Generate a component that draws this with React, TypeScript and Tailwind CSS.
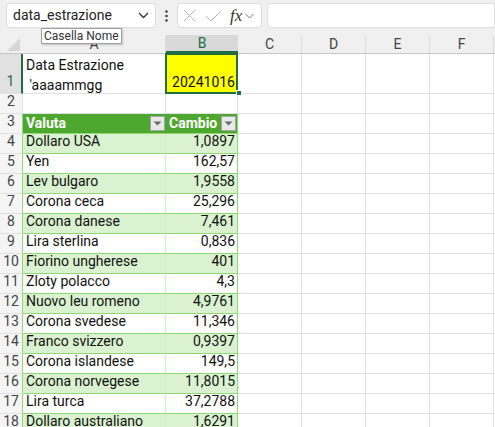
import React from "react";

const GRID = "border-[#e1e1e1]";

const data: [string, string][] = [
  ["Dollaro USA", "1,0897"],
  ["Yen", "162,57"],
  ["Lev bulgaro", "1,9558"],
  ["Corona ceca", "25,296"],
  ["Corona danese", "7,461"],
  ["Lira sterlina", "0,836"],
  ["Fiorino ungherese", "401"],
  ["Zloty polacco", "4,3"],
  ["Nuovo leu romeno", "4,9761"],
  ["Corona svedese", "11,346"],
  ["Franco svizzero", "0,9397"],
  ["Corona islandese", "149,5"],
  ["Corona norvegese", "11,8015"],
  ["Lira turca", "37,2788"],
  ["Dollaro australiano", "1,6291"],
];

function EmptyCells() {
  return (
    <>
      <div className={`w-[64px] shrink-0 border-r border-b ${GRID}`} />
      <div className={`w-[64px] shrink-0 border-r border-b ${GRID}`} />
      <div className={`w-[64px] shrink-0 border-r border-b ${GRID}`} />
      <div className={`w-[64px] shrink-0 border-r border-b ${GRID}`} />
      <div className={`w-[64px] shrink-0 border-r border-b ${GRID}`} />
    </>
  );
}

function RowHeader({ n }: { n: number }) {
  return (
    <div
      className={`w-[23px] shrink-0 flex items-end justify-center pb-[1px] border-b border-r ${GRID} bg-[#f5f5f5] text-[14px] text-[#444]`}
    >
      {n}
    </div>
  );
}

function Dropdown() {
  return (
    <div className="w-[15px] h-[15px] border border-[#a5a5a5] bg-[#e9e9e9] flex items-center justify-center">
      <svg width="9" height="5" viewBox="0 0 9 5">
        <path d="M0.5 0.5 L8.5 0.5 L4.5 4.5 Z" fill="#6b6b6b" />
      </svg>
    </div>
  );
}

export default function App() {
  return (
    <div
      className="w-[495px] h-[427px] overflow-hidden bg-white relative text-[#111]"
      style={{ fontFamily: "Roboto, 'Noto Sans', sans-serif" }}
    >
      {/* Toolbar */}
      <div className="h-[33px] bg-[#f0f0f0] flex items-start pt-[3px] pl-[6px]">
        <div className="w-[150px] h-[25px] bg-white border border-[#dcdcdc] rounded-[4px] flex items-center pl-[6px] pr-[6px] justify-between">
          <span className="text-[14px] text-[#222]">data_estrazione</span>
          <svg width="11" height="7" viewBox="0 0 11 7">
            <path d="M1 1 L5.5 5.5 L10 1" stroke="#333" strokeWidth="1.3" fill="none" />
          </svg>
        </div>
        <div className="w-[21px] h-[25px] flex items-center justify-center">
          <svg width="3" height="12" viewBox="0 0 3 12">
            <circle cx="1.5" cy="1.5" r="1.2" fill="#333" />
            <circle cx="1.5" cy="6" r="1.2" fill="#333" />
            <circle cx="1.5" cy="10.5" r="1.2" fill="#333" />
          </svg>
        </div>
        <div className="w-[85px] h-[25px] bg-white border border-[#dcdcdc] rounded-[4px] flex items-center pl-[5px]">
          <svg width="13" height="13" viewBox="0 0 13 13">
            <path d="M1 1 L12 12 M12 1 L1 12" stroke="#b4b4b4" strokeWidth="1" fill="none" />
          </svg>
          <svg width="17" height="12" viewBox="0 0 17 12" className="ml-[9px]">
            <path d="M1 6 L6 11 L16 1" stroke="#b4b4b4" strokeWidth="1" fill="none" />
          </svg>
          <span
            className="ml-[8px] text-[17px] italic text-[#333] leading-none"
            style={{ fontFamily: "'Liberation Serif', serif" }}
          >
            fx
          </span>
          <svg width="9" height="6" viewBox="0 0 9 6" className="ml-[3px]">
            <path d="M0.5 1 L4.5 5 L8.5 1" stroke="#777" strokeWidth="1" fill="none" />
          </svg>
        </div>
        <div className="ml-[5px] flex-1 h-[25px] bg-white border border-[#dcdcdc] rounded-l-[4px]" />
      </div>

      {/* Column header row */}
      <div className="h-[21px] flex bg-[#f0f0f0] border-b border-[#c6c6c6]">
        <div className="w-[23px] shrink-0 relative">
          <svg width="14" height="14" viewBox="0 0 14 14" className="absolute left-[7px] top-[5px]">
            <path d="M13 0 L13 13 L0 13 Z" fill="#d6d6d6" />
          </svg>
        </div>
        <div className="w-[143px] shrink-0 flex items-center justify-center text-[14px] text-[#444] border-r border-[#dadada] mt-[3px]">
          A
        </div>
        <div className="w-[72px] shrink-0 mt-[2px] bg-[#d9d9d9] border-b-2 border-[#1e6e42] flex items-center justify-center text-[14px] text-[#1e6e42]">
          B
        </div>
        {["C", "D", "E", "F"].map((c) => (
          <div
            key={c}
            className="w-[64px] shrink-0 flex items-center justify-center text-[14px] text-[#444] border-r border-[#dadada] mt-[3px]"
          >
            {c}
          </div>
        ))}
      </div>

      {/* Row 1 */}
      <div className="h-[40px] flex">
        <div className="w-[23px] shrink-0 flex items-end justify-center pb-[1px] border-b border-r-2 border-b-[#e1e1e1] border-r-[#1e6e42] bg-[#e1e1e1] text-[14px] text-[#1e6e42]">
          1
        </div>
        <div className={`w-[143px] shrink-0 border-r border-b ${GRID} pl-[3px] text-[14px] leading-[20px] pt-[1px]`}>
          <div>Data Estrazione</div>
          <div>&nbsp;&apos;aaaammgg</div>
        </div>
        <div className="w-[72px] shrink-0 relative border-b border-[#e1e1e1]">
          <div className="absolute -left-[1px] -top-[1px] w-[73px] h-[41px] border-2 border-[#1e6e42] bg-[#ffff00] flex items-end justify-end pr-[1px] pb-[2px] text-[14px] leading-[16px]">
            20241016
          </div>
          <div className="absolute right-[-4px] bottom-[-3px] w-[6px] h-[6px] bg-[#1e6e42] border border-white" />
        </div>
        <EmptyCells />
      </div>

      {/* Row 2 */}
      <div className="h-[20px] flex">
        <RowHeader n={2} />
        <div className={`w-[143px] shrink-0 border-r border-b ${GRID}`} />
        <div className={`w-[72px] shrink-0 border-r border-b ${GRID}`} />
        <EmptyCells />
      </div>

      {/* Row 3: table header */}
      <div className="h-[20px] flex">
        <div className="w-[23px] shrink-0 flex items-end justify-center pb-[1px] border-b border-r border-b-[#e1e1e1] border-r-[#8ed973] bg-[#f5f5f5] text-[14px] text-[#444]">
          3
        </div>
        <div className="w-[143px] shrink-0 bg-[#4ea72e] border-b border-[#8ed973] flex items-center justify-between pl-[3px] pr-[1px] text-white font-bold text-[14px]">
          <span>Valuta</span>
          <Dropdown />
        </div>
        <div className="w-[72px] shrink-0 bg-[#4ea72e] border-b border-r border-[#8ed973] flex items-center justify-between pl-[3px] pr-[1px] text-white font-bold text-[14px]">
          <span>Cambio</span>
          <Dropdown />
        </div>
        <EmptyCells />
      </div>

      {data.map(([name, val], i) => {
        const band = i % 2 === 0;
        return (
          <div key={name} className="h-[20px] flex">
            <div className="w-[23px] shrink-0 flex items-end justify-center pb-[1px] border-b border-r border-b-[#e1e1e1] border-r-[#8ed973] bg-[#f5f5f5] text-[14px] text-[#444]">
              {i + 4}
            </div>
            <div
              className={`w-[143px] shrink-0 border-b border-r border-b-[#8ed973] border-r-[#d4e8cc] ${band ? "bg-[#daf2d0]" : "bg-white"} pl-[3px] text-[14px] flex items-end pb-[1px] whitespace-nowrap`}
            >
              {name}
            </div>
            <div
              className={`w-[72px] shrink-0 border-b border-r border-[#8ed973] ${band ? "bg-[#daf2d0]" : "bg-white"} pr-[2px] text-[14px] flex items-end justify-end pb-[1px]`}
            >
              {val}
            </div>
            <EmptyCells />
          </div>
        );
      })}

      {/* Tooltip */}
      <div className="absolute left-[41px] top-[28px] h-[16px] px-[2px] bg-white border border-[#a0a0a0] shadow-[1px_1px_2px_rgba(0,0,0,0.2)] flex items-center text-[12px] text-[#333] leading-none">
        Casella Nome
      </div>
    </div>
  );
}
